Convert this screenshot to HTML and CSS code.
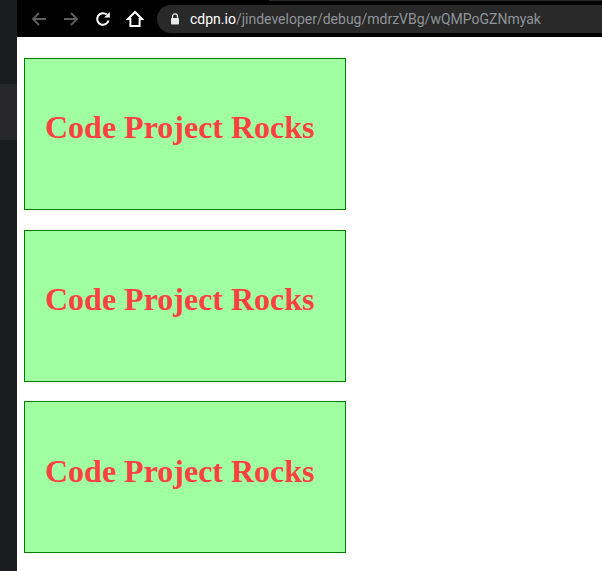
FILE: index.html
```html
<!DOCTYPE html>
<html lang="en">
<head>
<meta charset="utf-8">
<title>Code Project Rocks</title>
<link rel="stylesheet" href="styles.css">
</head>
<body>
<div class="app">
  <aside class="side"><div class="side-band"></div></aside>
  <div class="window">
    <header class="toolbar">
      <div class="tab-edge"></div>
      <svg class="icon back" viewBox="0 0 16 16"><path d="M15 8H2M8 2 2 8l6 6" fill="none" stroke="#5f5f5f" stroke-width="1.8"/></svg>
      <svg class="icon fwd" viewBox="0 0 16 16"><path d="M1 8h13M8 2l6 6-6 6" fill="none" stroke="#5f5f5f" stroke-width="1.8"/></svg>
      <svg class="icon reload" viewBox="0 0 16 16"><path d="M13.6 9.5A5.8 5.8 0 1 1 11.8 3.6" fill="none" stroke="#fff" stroke-width="2"/><path d="M9.2 6.6h5.6V1z" fill="#fff"/></svg>
      <svg class="icon home" viewBox="0 0 18 18"><path d="M9 2 2 9h2.4v7h9.2V9H16z" fill="none" stroke="#fff" stroke-width="2"/></svg>
      <div class="omnibox">
        <svg class="lock" viewBox="0 0 10 12"><path d="M2.5 5V3.4a2.5 2.5 0 0 1 5 0V5" fill="none" stroke="#e8e8e8" stroke-width="1.2"/><rect x="1" y="5" width="8" height="6.5" rx="1" fill="#e8e8e8"/></svg>
        <span class="url"><span class="host">cdpn.io</span>/jindeveloper/debug/mdrzVBg/wQMPoGZNmyak</span>
      </div>
    </header>
    <main class="content">
      <section class="card"><h1 class="title">Code Project Rocks</h1></section>
      <section class="card"><h1 class="title">Code Project Rocks</h1></section>
      <section class="card"><h1 class="title">Code Project Rocks</h1></section>
    </main>
  </div>
</div>
</body>
</html>
```
FILE: styles.css
```css
html, body {
  margin: 0;
  height: 100%;
  background: #fff;
  overflow: hidden;
}
.app {
  display: flex;
  height: 571px;
}
.side {
  width: 17px;
  flex: none;
  background: #1b1c20;
  padding-top: 84px;
  box-sizing: border-box;
}
.side-band {
  height: 56px;
  background: #27272b;
}
.window {
  flex: 1;
  min-width: 0;
}
.toolbar {
  position: relative;
  height: 37px;
  background: #000;
  display: flex;
  align-items: center;
  box-sizing: border-box;
  padding: 1px 0 0 14px;
}
.tab-edge {
  position: absolute;
  top: 0;
  left: 252px;
  right: 0;
  height: 1px;
  background: #2a2a2a;
}
.icon {
  flex: none;
  display: block;
}
.back, .fwd {
  width: 16px;
  height: 16px;
}
.fwd {
  margin-left: 16px;
}
.reload {
  width: 16px;
  height: 16px;
  margin-left: 16px;
}
.home {
  width: 18px;
  height: 18px;
  margin-left: 15px;
}
.omnibox {
  flex: none;
  width: 445px;
  height: 28px;
  margin-left: 13px;
  border-radius: 14px 0 0 14px;
  background: #292929;
  display: flex;
  align-items: center;
  padding-left: 13px;
  box-sizing: border-box;
}
.lock {
  width: 10px;
  height: 12px;
  flex: none;
}
.url {
  margin-left: 10px;
  font: 14px/18px Roboto, "Liberation Sans", sans-serif;
  color: #8f9499;
  white-space: nowrap;
}
.host {
  color: #fff;
}
.content {
  display: flex;
  flex-direction: column;
  align-items: flex-start;
  gap: 19.7px;
  padding: 21px 0 0 7px;
}
.card {
  width: 322px;
  height: 152px;
  box-sizing: border-box;
  background: #a0ffa0;
  border: 1px solid #008000;
  padding: 50.2px 0 0 20px;
}
.title {
  margin: 0;
  font: bold 32px/37px "Liberation Serif", "Times New Roman", serif;
  color: #ff4040;
  white-space: nowrap;
}
```
